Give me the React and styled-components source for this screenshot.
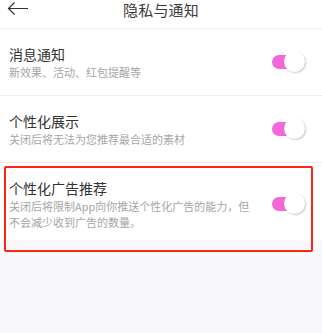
import React from "react";
import styled, { createGlobalStyle } from "styled-components";

const Global = createGlobalStyle`
  html, body { margin: 0; padding: 0; background: #f9f9fc; }
  body { font-family: "Noto Sans CJK SC", "Noto Sans", sans-serif; }
`;

const Page = styled.div`
  width: 322px;
  min-height: 333px;
  background: #f9f9fc;
`;

const Header = styled.div`
  position: relative;
  height: 28px;
  display: flex;
  align-items: center;
  justify-content: center;
  background: #fff;
  border-bottom: 1px solid #f0f0f2;
`;

const Back = styled.div`
  position: absolute;
  left: 7px;
  top: 1px;
  width: 22px;
  height: 15px;
  display: flex;
`;

const Title = styled.div`
  font-size: 15px;
  line-height: 20px;
  color: #3a3a3a;
  margin-top: -8px;
  letter-spacing: 0.2px;
`;

const List = styled.div`
  background: #fff;
`;

const Item = styled.div`
  position: relative;
  display: flex;
  align-items: center;
  justify-content: space-between;
  padding: 15px 17px ${(p) => (p.$last ? "10px" : "15px")} 9px;
  border-bottom: ${(p) => (p.$last ? "none" : "1px solid #eeeeef")};
`;

const Texts = styled.div`
  display: flex;
  flex-direction: column;
  max-width: 246px;
`;

const ItemTitle = styled.div`
  font-size: 14px;
  line-height: 20px;
  color: #333;
`;

const ItemSub = styled.div`
  font-size: 11px;
  line-height: 16px;
  color: #a6a6a6;
`;

const Toggle = styled.div`
  position: relative;
  width: 33px;
  height: 22px;
  flex-shrink: 0;
`;

const Track = styled.div`
  position: absolute;
  left: 0;
  top: 4px;
  width: 28px;
  height: 14px;
  border-radius: 7px;
  background: #f467d8;
`;

const Knob = styled.div`
  position: absolute;
  right: 0;
  top: 0;
  width: 21px;
  height: 21px;
  border-radius: 50%;
  background: #fff;
  box-shadow: 1px 1px 2px rgba(0, 0, 0, 0.22);
`;

const Highlight = styled.div`
  position: absolute;
  top: 3px;
  left: 4px;
  right: 9px;
  bottom: -12px;
  border: 2.5px solid #ff2416;
  border-radius: 2px;
  pointer-events: none;
`;

const items = [
  { title: "消息通知", sub: "新效果、活动、红包提醒等" },
  { title: "个性化展示", sub: "关闭后将无法为您推荐最合适的素材" },
  {
    title: "个性化广告推荐",
    sub: "关闭后将限制App向你推送个性化广告的能力，但不会减少收到广告的数量。",
    highlight: true,
  },
];

export default function App() {
  return (
    <Page>
      <Global />
      <Header>
        <Back>
          <svg width="22" height="15" viewBox="0 0 22 15">
            <path d="M21 7.5H1.5M7.5 1.5L1.5 7.5L7.5 13.5" fill="none" stroke="#333" strokeWidth="1.2" />
          </svg>
        </Back>
        <Title>隐私与通知</Title>
      </Header>
      <List>
        {items.map((it, i) => (
          <Item key={i} $last={i === items.length - 1}>
            <Texts>
              <ItemTitle>{it.title}</ItemTitle>
              <ItemSub>{it.sub}</ItemSub>
            </Texts>
            <Toggle>
              <Track />
              <Knob />
            </Toggle>
            {it.highlight && <Highlight />}
          </Item>
        ))}
      </List>
    </Page>
  );
}
